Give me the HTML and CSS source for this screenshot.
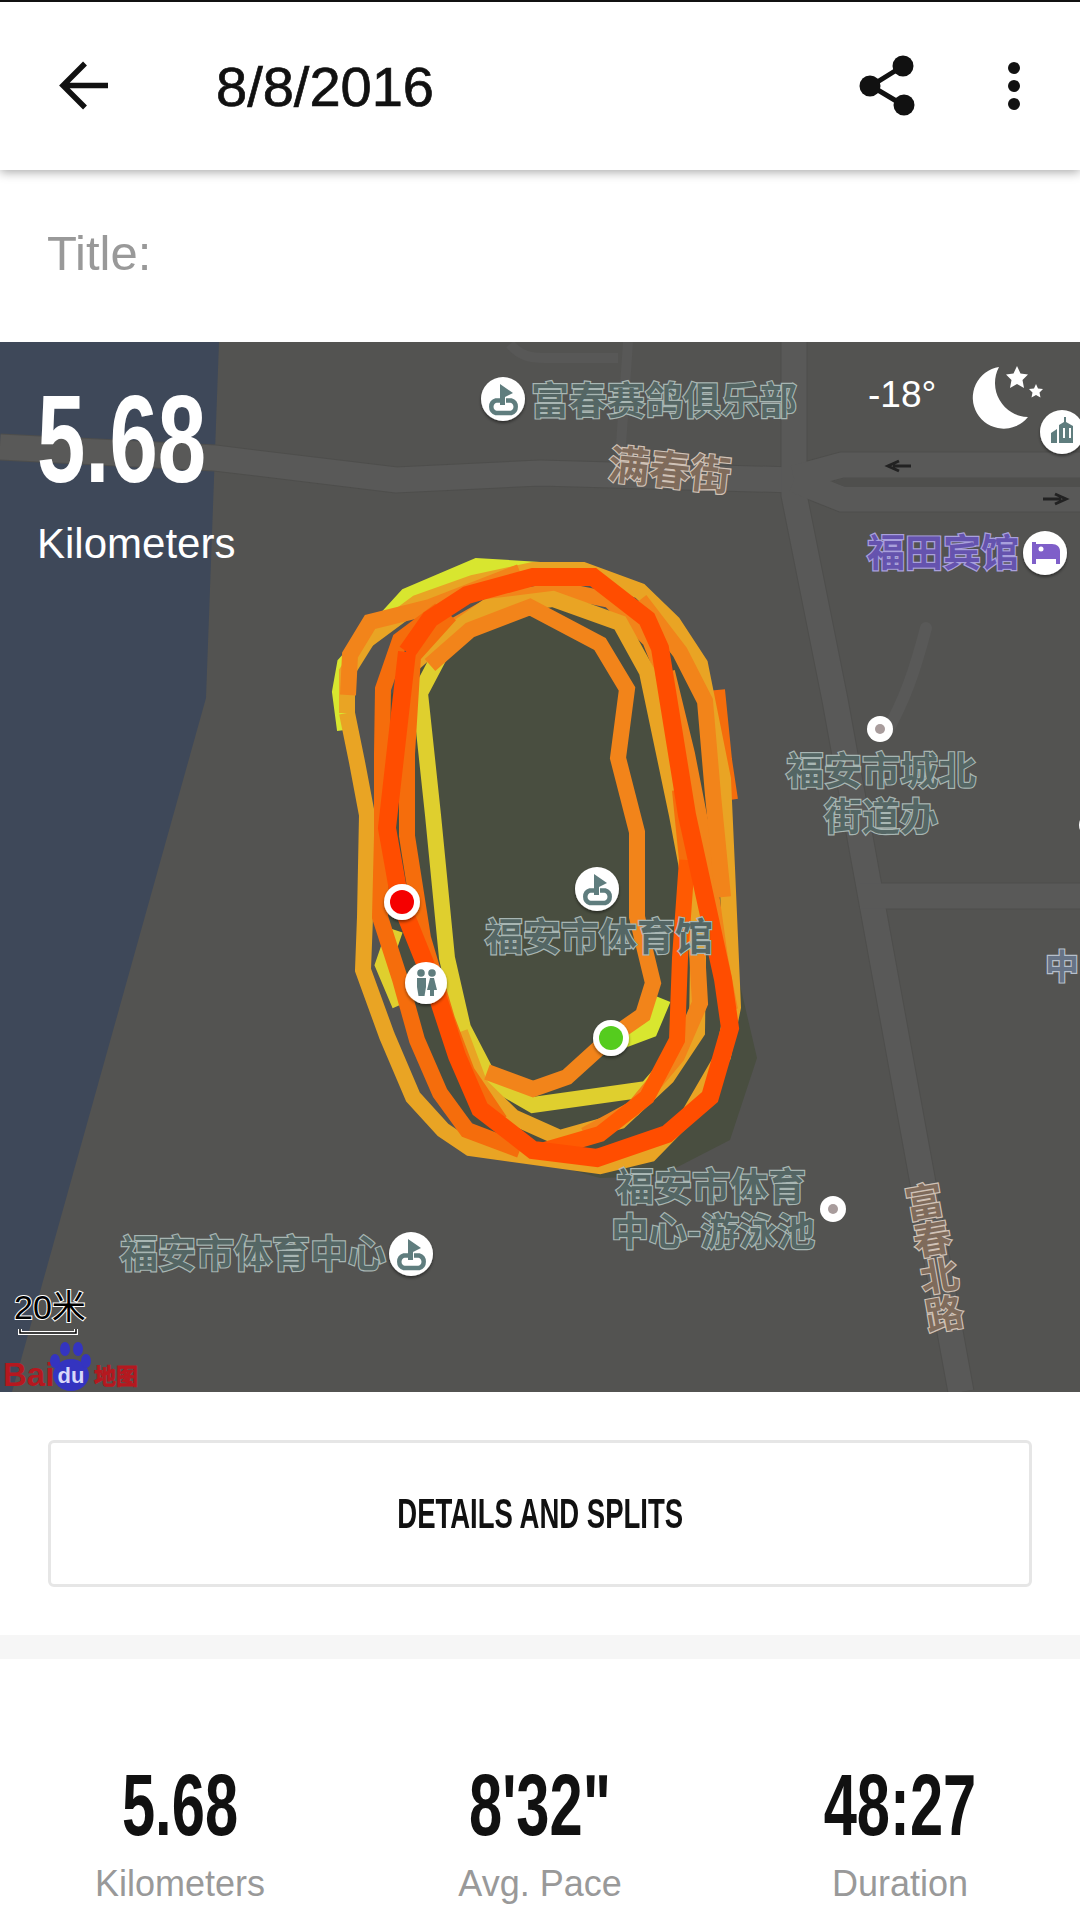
FILE: index.html

```html
<!DOCTYPE html>
<html lang="en">
<head>
    <meta charset="UTF-8" />
    <meta name="viewport" content="width=device-width, initial-scale=1" />
    <title>Run 8/8/2016</title>
    <link rel="stylesheet" href="styles.css">
</head>
<body>

    <header class="topbar">
        <svg class="icon-back" viewBox="0 0 52 52" width="52" height="52">
            <path d="M50 25.5H6M27 3.500L5 25.500L27 47.500" fill="none" stroke="#111" stroke-width="5.500"/>
        </svg>
        <h1 class="topbar-title">8/8/2016</h1>
        <svg class="icon-share" viewBox="0 0 56 62" width="56" height="62">
            <path d="M44 11L12 31L44 50" fill="none" stroke="#111" stroke-width="5"/>
            <circle cx="44" cy="11" r="10.500" fill="#111"/>
            <circle cx="11" cy="31" r="10.500" fill="#111"/>
            <circle cx="45" cy="50" r="10.500" fill="#111"/>
        </svg>
        <svg class="icon-more" viewBox="0 0 14 50" width="14" height="50">
            <circle cx="7" cy="7" r="6" fill="#111"/>
            <circle cx="7" cy="25" r="6" fill="#111"/>
            <circle cx="7" cy="43" r="6" fill="#111"/>
        </svg>
    </header>

    <div class="title-row">Title:</div>

    <section class="map">
        <!-- viewBox uses page coordinates so the points read the same as the screenshot -->
        <svg class="map-canvas" viewBox="0 342 1080 1050" width="1080" height="1050">
            <defs>
                <symbol id="park" viewBox="-22 -22 44 44" overflow="visible">
                    <path d="M-3 1.500H-7A6.500 6.500 0 0 0 -7 14H8A6.500 6.500 0 0 0 8 1.500H3" fill="none" stroke="#5f7d7e" stroke-width="4.500"/>
                    <path d="M-3 -15L10 -6L2 -2V6H-3Z" fill="#5f7d7e"/>
                </symbol>
                <filter id="pin-shadow" x="-30%" y="-30%" width="160%" height="160%">
                    <feDropShadow dx="0" dy="2" stdDeviation="1.500" flood-color="#000" flood-opacity="0.45"/>
                </filter>
            </defs>

            <rect x="0" y="342" width="1080" height="1050" fill="#535351"/>
            <polygon points="0,342 219,342 206,698 12,1392 0,1392" fill="#3e4859"/>

            <!-- roads -->
            <g class="road-casing">
                <path d="M0 447L215 458L396 480L540 473L794 480"/>
                <path d="M794 342V495L835 700L961 1392"/>
                <path d="M794 478L842 465H1080M794 480L842 499H1080"/>
                <path d="M860 896H1080"/>
            </g>
            <g class="road">
                <path d="M0 447L215 458L396 480L540 473L794 480"/>
                <path d="M794 342V495L835 700L961 1392"/>
                <path d="M794 478L842 465H1080M794 480L842 499H1080"/>
                <path d="M860 896H1080"/>
            </g>
            <path class="road-thin" d="M926 628C915 670 905 700 885 735"/>
            <path class="road-faint" d="M510 344C520 356 530 358 545 358H618M628 342L620 460"/>
            <polygon points="833,482 846,478 1080,478 1080,487 846,487" fill="#4f4f4d"/>

            <!-- park -->
            <polygon points="530,600 420,650 375,720 385,900 410,1010 450,1100 500,1150 600,1178 660,1176 730,1140 757,1058 740,985 720,870 705,700 650,620" fill="#494e40"/>

            <!-- track, back to front -->
            <g class="track">
                <polyline class="t-lime" points="345,730 340,692 345,664 407,596 477,566 540,570"/>
                <polyline class="t-lime" points="663,999 650,1030 610,1045"/>
                <polyline class="t-yellow" points="395,930 383,965 400,1005"/>
                <polyline class="t-yellow" points="440,655 420,693 433,815 447,958 463,1028 490,1080 533,1105 647,1089 693,1036"/>
                <polyline class="t-yellow" points="665,740 690,840 700,880"/>
                <polyline class="t-deep" points="717,690 724,760 730,800"/>
                <polyline class="t-ochre" points="347,713 357,762 367,815 365,917 363,970 387,1036 413,1097 443,1130 470,1148 513,1154 600,1166 650,1154 690,1113 723,1056 733,1007 727,868 723,779 700,664 673,623 640,591 583,570 533,570 473,583 417,603 367,640 347,672 347,713"/>
                <polyline class="t-orange" points="520,572 430,607 370,622 350,655 348,695"/>
                <polyline class="t-orange" points="667,672 687,754 703,836 720,958 730,1010"/>
                <polyline class="t-orange" points="640,600 680,652 705,701 713,795 723,897"/>
                <polyline class="t-orange" points="430,640 500,600 560,590 610,600 650,640 670,690"/>
                <polyline class="t-ochre" points="413,664 440,640 487,607 553,599 620,623 647,672 660,734 677,815 687,868 698,958 697,1032 667,1077 620,1121 560,1138 513,1117 480,1085 460,1032"/>
                <polyline class="t-orange" points="610,1038 643,1015 653,983 637,917 637,832 618,758 627,689 600,644 530,607 470,630 430,665"/>
                <polyline class="t-orange" points="610,1038 567,1077 533,1089 487,1072"/>
                <polyline class="t-deep" points="440,610 400,640 383,689 382,754 382,836 380,917 400,979 417,1040 440,1093 467,1130 520,1150"/>
                <polyline class="t-deep" points="450,615 413,656 407,754 407,836 423,938 447,1019 467,1072 500,1121"/>
                <polyline class="t-orange" points="697,950 700,1003 677,1056 633,1109 585,1135"/>
                <polyline class="t-deep" points="680,790 687,860"/>
                <polyline class="t-red2" points="687,860 680,958 677,1040 647,1097 600,1134 545,1150"/>
                <polyline class="t-red" points="407,652 400,713 387,828 400,901 433,983 457,1056 480,1109 533,1150 597,1158 667,1134 710,1097 730,1028 723,979 687,815 660,648 647,619 593,577 533,577 467,595 430,619 407,652"/>
            </g>

            <!-- pins -->
            <g class="pin">
                <circle cx="503" cy="399" r="22" filter="url(#pin-shadow)"/>
                <circle cx="597" cy="889" r="22" filter="url(#pin-shadow)"/>
                <circle cx="411" cy="1254" r="22" filter="url(#pin-shadow)"/>
                <circle cx="1062" cy="432" r="22" filter="url(#pin-shadow)"/>
                <circle cx="1045" cy="553" r="22" filter="url(#pin-shadow)"/>
                <circle cx="426" cy="983" r="21" filter="url(#pin-shadow)"/>
                <circle cx="880" cy="729" r="13"/>
                <circle cx="833" cy="1209" r="13"/>
                <circle cx="1092" cy="825" r="13"/>
                <circle cx="402" cy="902" r="18" filter="url(#pin-shadow)"/>
                <circle cx="611" cy="1038" r="18" filter="url(#pin-shadow)"/>
            </g>
            <circle cx="402" cy="902" r="12" fill="#f50000"/>
            <circle cx="611" cy="1038" r="12" fill="#55cc1e"/>
            <circle cx="880" cy="729" r="5" fill="#a89c9c"/>
            <circle cx="833" cy="1209" r="5" fill="#a89c9c"/>
            <use href="#park" x="481" y="377" width="44" height="44"/>
            <use href="#park" x="575" y="867" width="44" height="44"/>
            <use href="#park" x="389" y="1232" width="44" height="44"/>

            <!-- building -->
            <path d="M1051 443V433L1057 429V443ZM1059 443V425L1064 422V417H1066V422L1073 426V443Z" fill="#5f7d7e"/>
            <path d="M1063 428H1065V438H1063ZM1069 428H1071V438H1069Z" fill="#fff"/>
            <!-- bed -->
            <path d="M1032 542H1036V544H1052C1057 544 1060 547 1060 551V564H1056V559H1036V564H1032Z" fill="#7f5fc9"/>
            <circle cx="1041" cy="549" r="2.500" fill="#fff"/>
            <!-- restroom -->
            <g fill="#5f7d7e">
                <circle cx="421" cy="973" r="3.800"/>
                <circle cx="432" cy="973" r="3.800"/>
                <path d="M417 978H426V987L424.500 996H418.500L417 987Z"/>
                <path d="M430 978H434L437 990H434V996H430V990H427Z"/>
            </g>

            <!-- arrows on the road -->
            <path d="M911 466H893M899 461L888 466L899 471" class="road-arrow"/>
            <path d="M1043 499H1061M1055 494L1066 499L1055 504" class="road-arrow"/>

            <!-- labels -->
            <g class="label label-poi">
                <text x="531" y="414">富春赛鸽俱乐部</text>
                <text x="786" y="784">福安市城北</text>
                <text x="824" y="830">街道办</text>
                <text x="485" y="950">福安市体育馆</text>
                <text x="616" y="1200">福安市体育</text>
                <text x="611" y="1245">中心-游泳池</text>
                <text x="120" y="1267">福安市体育中心</text>
            </g>
            <g class="label label-road">
                <text class="label-big" x="608" y="485" transform="rotate(6 670 472)">满春街</text>
                <text x="908 916 923 928" y="1219 1256 1293 1331" rotate="-10">富春北路</text>
            </g>
            <text class="label label-hotel" x="867" y="566">福田宾馆</text>
            <text class="label label-blue" x="1045" y="979">中</text>

            <!-- scale -->
            <text class="scale-text" x="14" y="1319">20米</text>
            <path class="scale-bar-back" d="M20 1329V1333H76V1329"/>
            <path class="scale-bar" d="M20 1329V1333H76V1329"/>

            <!-- baidu logo -->
            <text class="baidu-red" x="3" y="1386">Bai</text>
            <g fill="#3434c0">
                <ellipse cx="71" cy="1375" rx="18" ry="16"/>
                <ellipse cx="55" cy="1361" rx="5" ry="7"/>
                <ellipse cx="65" cy="1349" rx="5" ry="7"/>
                <ellipse cx="78" cy="1349" rx="5" ry="7"/>
                <ellipse cx="86" cy="1361" rx="5" ry="7"/>
            </g>
            <text class="baidu-du" x="71" y="1383">du</text>
            <text class="baidu-map" x="94" y="1384">地图</text>
        </svg>

        <div class="map-distance">
            <div class="map-distance-value">5.68</div>
            <div class="map-distance-unit">Kilometers</div>
        </div>

        <div class="weather">
            <span class="weather-temp">-18°</span>
            <svg class="weather-icon" viewBox="0 0 80 66" width="80" height="66">
                <path d="M28 1A31 31 0 1 0 57 51A34 34 0 0 1 28 1Z" fill="#fff"/>
                <polygon points="46,0 49.500,7.500 57,8.500 51.500,14 53,22 46,18 39,22 40.500,14 35,8.500 42.500,7.500" fill="#fff"/>
                <polygon points="65,18 67,22.500 72,23 68.500,26.500 69.500,31.500 65,29 60.500,31.500 61.500,26.500 58,23 63,22.500" fill="#fff"/>
            </svg>
        </div>
    </section>

    <div class="details-wrap">
        <button class="details-btn"><span class="condensed">DETAILS AND SPLITS</span></button>
    </div>

    <div class="band"></div>

    <section class="stats">
        <div class="stat">
            <div class="stat-value">5.68</div>
            <div class="stat-label">Kilometers</div>
        </div>
        <div class="stat">
            <div class="stat-value">8'32"</div>
            <div class="stat-label">Avg. Pace</div>
        </div>
        <div class="stat">
            <div class="stat-value">48:27</div>
            <div class="stat-label">Duration</div>
        </div>
    </section>

</body>
</html>
```

FILE: styles.css

```css
body {
    font-family: 'Liberation Sans', Arial, sans-serif;
    margin: 0;
    width: 1080px;
    height: 1921px;
    overflow: hidden;
    background: #fff;
    color: #111;
}

/* top bar */
.topbar {
    position: relative;
    z-index: 2;
    display: flex;
    align-items: center;
    box-sizing: border-box;
    height: 170px;
    padding: 0 0 0 58px;
    border-top: 2px solid #111;
    background: #fff;
    box-shadow: 0 2px 10px rgba(0,0,0,0.35);
}
.topbar-title {
    flex: 1;
    margin: 0 0 0 106px;
    font-size: 56px;
    font-weight: 400;
    -webkit-text-stroke: 0.7px #111;
}
.icon-share {
    margin-right: 92px;
}
.icon-more {
    margin-right: 59px;
}

.title-row {
    box-sizing: border-box;
    height: 172px;
    padding: 56px 0 0 47px;
    font-size: 49px;
    line-height: 54px;
    color: #999;
}

/* map */
.map {
    position: relative;
    height: 1050px;
    overflow: hidden;
}
.map-canvas {
    display: block;
}
.road-casing path {
    fill: none;
    stroke: #4e4e4c;
    stroke-width: 27px;
}
.road path {
    fill: none;
    stroke: #595958;
    stroke-width: 25px;
}
.road-thin {
    fill: none;
    stroke: #595958;
    stroke-width: 12px;
    stroke-linecap: round;
}
.road-faint {
    fill: none;
    stroke: #585857;
    stroke-width: 10px;
}
.track polyline {
    fill: none;
    stroke-width: 16px;
}
.t-lime { stroke: #d8e62f; }
.t-yellow { stroke: #dfcf2e; }
.t-ochre { stroke: #e9a424; }
.t-orange { stroke: #f2841a; }
.t-deep { stroke: #f56d0c; }
.t-red2 { stroke: #ff5a02; }
.track .t-red { stroke: #ff4d00; stroke-width: 18px; }
.pin circle {
    fill: #fff;
}
.road-arrow {
    fill: none;
    stroke: #222;
    stroke-width: 3px;
}
.label {
    font-family: 'Noto Sans CJK SC', sans-serif;
    font-size: 38px;
    font-weight: 700;
    stroke-width: 2.4px;
    paint-order: stroke;
}
.label-big {
    font-size: 41px;
}
.label-poi {
    fill: #546664;
    stroke: #a8b6b3;
}
.label-road {
    fill: #7f6b5b;
    stroke: #d0c2b6;
}
.label-hotel {
    fill: #6553ae;
    stroke: #a9a0dc;
}
.label-blue {
    font-size: 34px;
    fill: #667386;
    stroke: #b6bfca;
}
.scale-text {
    font-family: 'Liberation Sans', 'Noto Sans CJK SC', sans-serif;
    font-size: 34px;
    fill: #000;
    stroke: #fff;
    stroke-width: 2px;
    paint-order: stroke;
}
.scale-bar-back {
    fill: none;
    stroke: #fff;
    stroke-width: 4px;
}
.scale-bar {
    fill: none;
    stroke: #000;
    stroke-width: 1.500px;
}
.baidu-red {
    font-family: 'Liberation Sans', sans-serif;
    font-size: 33px;
    font-weight: 700;
    fill: #b5181f;
}
.baidu-du {
    font-family: 'Liberation Sans', sans-serif;
    font-size: 22px;
    font-weight: 700;
    fill: #d8d8fa;
    text-anchor: middle;
}
.baidu-map {
    font-family: 'Noto Sans CJK SC', sans-serif;
    font-size: 22px;
    font-weight: 700;
    fill: #b5181f;
    stroke: #b5181f;
    stroke-width: 0.8px;
}

/* numbers over the map */
.map-distance {
    position: absolute;
    left: 37px;
    top: 0;
    color: #fff;
}
.map-distance-value {
    font-size: 125px;
    font-weight: 700;
    line-height: 125px;
    margin-top: 34px;
    transform: scaleX(0.695);
    transform-origin: left center;
}
.map-distance-unit {
    font-size: 42px;
    line-height: 48px;
    margin-top: 19px;
}
.weather {
    position: absolute;
    top: 24px;
    left: 868px;
    display: flex;
    align-items: flex-start;
    color: #fff;
}
.weather-temp {
    font-size: 37px;
    line-height: 36px;
    margin-top: 11px;
    width: 103px;
}

/* button */
.details-wrap {
    padding: 48px;
}
.details-btn {
    display: flex;
    align-items: center;
    justify-content: center;
    box-sizing: border-box;
    width: 100%;
    height: 147px;
    border: 3px solid #e6e6e6;
    border-radius: 6px;
    background: #fff;
    font-family: inherit;
    color: #111;
    padding: 0;
}
.condensed {
    display: inline-block;
    font-size: 42px;
    font-weight: 700;
    white-space: nowrap;
    transform: scaleX(0.655);
}

.band {
    height: 24px;
    background: #f6f6f6;
}

/* stat row */
.stats {
    display: grid;
    grid-template-columns: repeat(3, 1fr);
    padding-top: 102px;
    text-align: center;
}
.stat-value {
    font-size: 87px;
    font-weight: 700;
    line-height: 87px;
    transform: scaleX(0.686);
}
.stat-label {
    font-size: 36px;
    line-height: 42px;
    margin-top: 15px;
    color: #999;
}
```
